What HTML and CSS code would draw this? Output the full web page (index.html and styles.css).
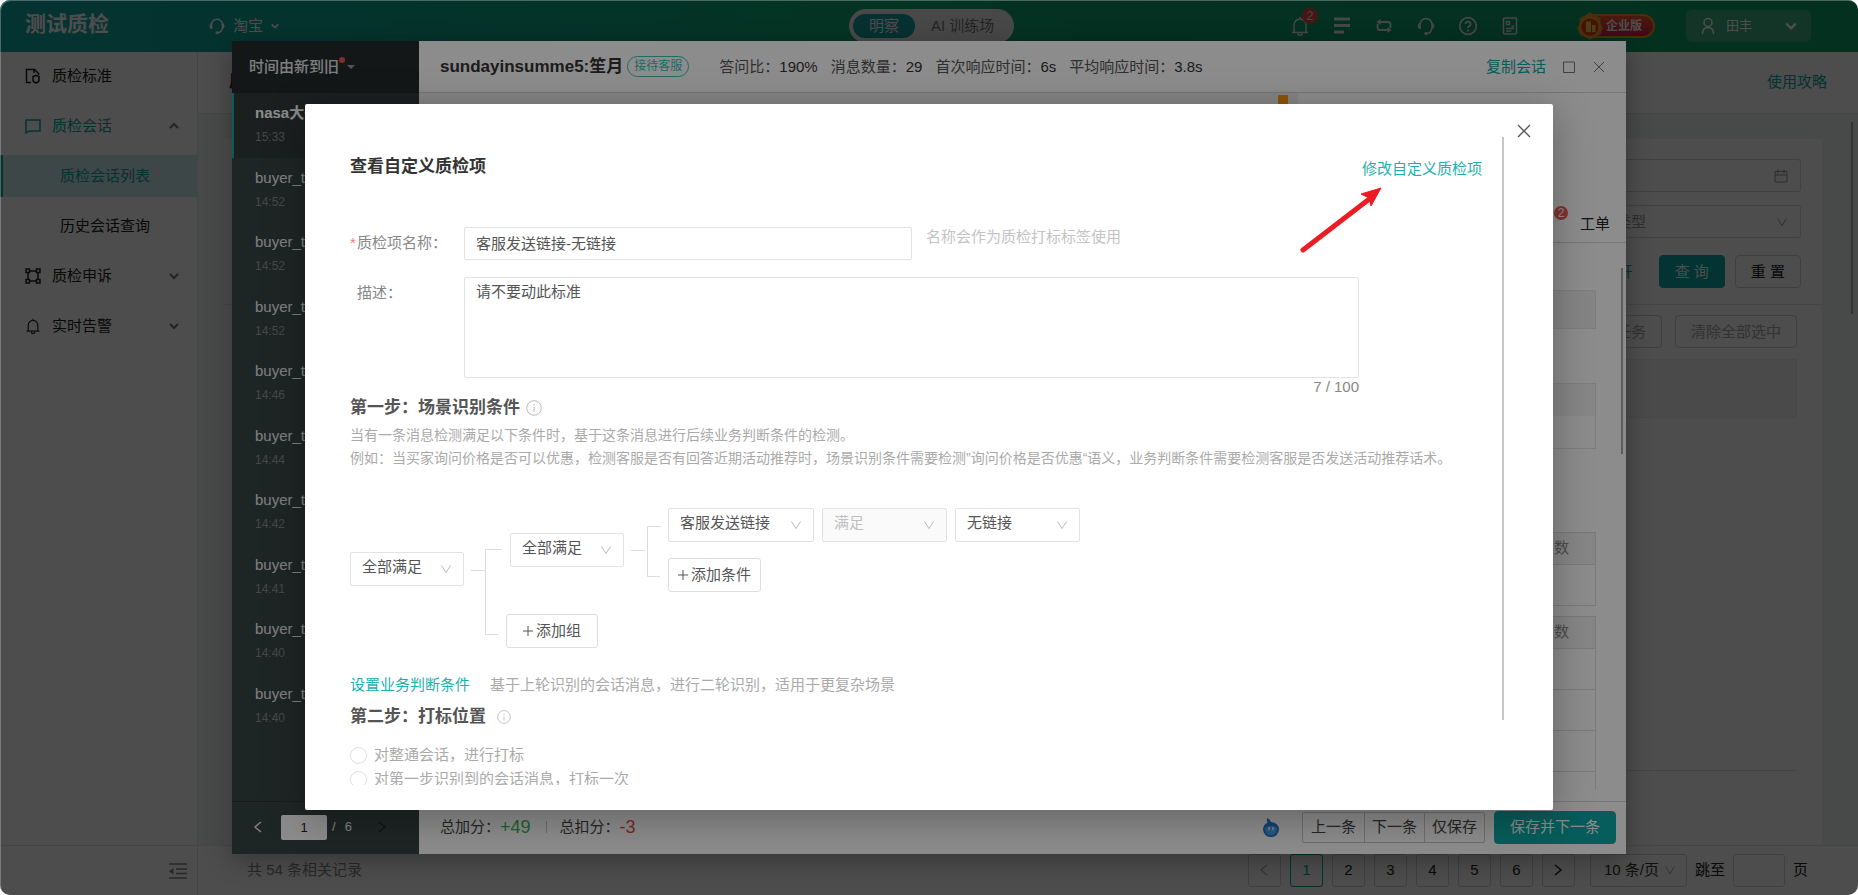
FILE: index.html
```html
<!DOCTYPE html>
<html lang="zh-CN">
<head>
<meta charset="utf-8">
<title>测试质检</title>
<link rel="stylesheet" href="styles.css">
</head>
<body>
<svg class="defs" aria-hidden="true">
  <symbol id="down" viewBox="0 0 12 12"><path d="M1.500 2.500 6 9.500l4.500-7" fill="none" stroke="currentColor"/></symbol>
  <symbol id="chev" viewBox="0 0 12 12"><path d="M2 4l4 4 4-4" fill="none" stroke="currentColor" stroke-width="2"/></symbol>
  <symbol id="left" viewBox="0 0 12 12"><path d="M9 1 3 6l6 5" fill="none" stroke="currentColor" stroke-width="1.500"/></symbol>
  <symbol id="right" viewBox="0 0 12 12"><path d="M3 1l6 5-6 5" fill="none" stroke="currentColor" stroke-width="1.500"/></symbol>
  <symbol id="close" viewBox="0 0 14 14"><path d="M1 1l12 12M13 1 1 13" fill="none" stroke="currentColor" stroke-width="1.300"/></symbol>
  <symbol id="info" viewBox="0 0 16 16"><circle cx="8" cy="8" r="7.300" fill="none" stroke="currentColor"/><path d="M8 7v5M8 4v1.500" stroke="currentColor"/></symbol>
  <symbol id="headset" viewBox="0 0 20 20"><path d="M4 13V8.500a6 6 0 0 1 12 0V13M15.500 13q-.5 4.500-5 4.500" fill="none" stroke="currentColor" stroke-width="1.600"/><path d="M3.500 7Q.5 10 3.500 13zM16.500 7q3 3 0 6z" fill="currentColor" stroke="currentColor"/><circle cx="10" cy="17.500" r="1.700" fill="currentColor"/></symbol>
  <symbol id="bell" viewBox="0 0 20 20"><path d="M2 16.500h16M4 16V9a6 6 0 0 1 12 0v7M10 3V1M8 17.500a2 2 0 0 0 4 0" fill="none" stroke="currentColor" stroke-width="1.500"/></symbol>
</svg>

<div class="app">
  <header class="topbar">
    <h1 class="brand">测试质检</h1>
    <button class="shop"><svg class="i18"><use href="#headset"/></svg><span>淘宝</span><svg class="i10"><use href="#chev"/></svg></button>
    <nav class="switch"><a class="switch-item on" href="#">明察</a><a class="switch-item" href="#">AI 训练场</a></nav>
    <div class="tools">
      <button class="tool" aria-label="通知"><svg class="i20"><use href="#bell"/></svg><span class="count">2</span></button>
      <button class="tool" aria-label="列表"><svg class="i20" viewBox="0 0 20 20"><path d="M2 3h16M2 9.500h16M2 16h10" stroke="currentColor" stroke-width="3"/></svg></button>
      <button class="tool" aria-label="切换"><svg class="i20" viewBox="0 0 20 20"><path d="M5 6h9q2.500 0 2.500 2.500V12M15 14H6q-2.500 0-2.500-2.500V8" fill="none" stroke="currentColor" stroke-width="1.800"/><path d="M6.500 3v6L2.500 6zM13.500 11v6l4-3z" fill="currentColor"/></svg></button>
      <button class="tool" aria-label="客服"><svg class="i20"><use href="#headset"/></svg></button>
      <button class="tool" aria-label="帮助"><svg class="i20" viewBox="0 0 20 20"><circle cx="10" cy="10" r="8.300" fill="none" stroke="currentColor" stroke-width="1.800"/><path d="M7.500 8a2.500 2.500 0 1 1 3.500 2.300q-1 .5-1 1.700M10 13.500v2" fill="none" stroke="currentColor" stroke-width="1.800"/></svg></button>
      <button class="tool" aria-label="文档"><svg class="i20" viewBox="0 0 20 20"><rect x="3.500" y="2" width="13" height="16" rx="1" fill="none" stroke="currentColor" stroke-width="1.500"/><path d="M6.500 5.500h3v3h-3zM11.500 10.500H14M6 12.500h8M6 15h5.500" fill="none" stroke="currentColor" stroke-width="1.300"/></svg></button>
    </div>
    <div class="edition">
      <svg class="medal" viewBox="0 0 28 30"><path d="M14 1l4 3 6 3 1 7 2 3-3 7-5 2-5 3-5-3-5-2-3-7 2-3 1-7 6-3z" fill="#f39a2c"/><circle cx="14" cy="16" r="9.500" fill="#e8470c" stroke="#ffb03a" stroke-width="1.500"/><path d="M10 10.500h5V21h-5zM16 14h3.500v7H16z" fill="#ffd05a"/></svg>
      <span class="edition-name">企业版</span>
    </div>
    <button class="user"><svg class="i18" viewBox="0 0 18 18"><circle cx="9" cy="5.500" r="4" fill="none" stroke="currentColor" stroke-width="1.500"/><path d="M3.500 17q0-6.500 5.500-6.500t5.500 6.500" fill="none" stroke="currentColor" stroke-width="1.500"/></svg><span class="user-name">田丰</span><svg class="i14"><use href="#chev"/></svg></button>
  </header>

  <aside class="side">
    <nav class="menu">
      <a class="menu-item" href="#"><svg class="i16" viewBox="0 0 16 16"><path d="M6 14.500H1.500v-13h8l4 4V7M9 1.500V5" fill="none" stroke="currentColor" stroke-width="1.500"/><path d="M8 8.500l3-1 3 1V12q0 2-3 3-3-1-3-3z" fill="none" stroke="currentColor" stroke-width="1.500"/></svg><span>质检标准</span></a>
      <a class="menu-item open" href="#"><svg class="i16" viewBox="0 0 16 16"><path d="M1 2h14v11H4l-3 2z" fill="none" stroke="currentColor" stroke-width="1.500"/></svg><span>质检会话</span><svg class="i12 arrow up"><use href="#chev"/></svg></a>
      <a class="menu-sub on" href="#">质检会话列表</a>
      <a class="menu-sub" href="#">历史会话查询</a>
      <a class="menu-item" href="#"><svg class="i16" viewBox="0 0 16 16"><path d="M3 4v8M13 4v8M4 3h8M4 13h8M1 1h3.500v3.500H1zM11.500 1H15v3.500h-3.500zM1 11.500h3.500V15H1zM11.500 11.500H15V15h-3.500z" fill="none" stroke="currentColor" stroke-width="1.500"/></svg><span>质检申诉</span><svg class="i12 arrow"><use href="#chev"/></svg></a>
      <a class="menu-item" href="#"><svg class="i16"><use href="#bell"/></svg><span>实时告警</span><svg class="i12 arrow"><use href="#chev"/></svg></a>
    </nav>
    <div class="fold"><button class="plain" aria-label="收起"><svg class="i18" viewBox="0 0 18 18"><path d="M0 2h18M7 7h11M7 11.500h11M0 16h18" stroke="currentColor" stroke-width="1.500"/><path d="M4.500 6v6.500L0 9.200z" fill="currentColor"/></svg></button></div>
  </aside>

  <main class="main">
    <div class="pagehead"><h2 class="pagetitle">质检会话列表</h2><a class="guide" href="#">使用攻略</a></div>
    <div class="content">
      <span class="content-bar"></span>
      <section class="card">
        <div class="filters">
          <div class="field"><input class="field-input" type="text" aria-label="日期"><svg class="i14" viewBox="0 0 14 14"><path d="M1 2.500h12v10.500H1zM1 6h12M4 .5v4M10 .5v4" fill="none" stroke="currentColor"/></svg></div>
          <div class="field"><select class="field-input" aria-label="类型"><option>类型</option></select><svg class="i12"><use href="#down"/></svg></div>
          <div class="actions"><a class="guide" href="#">展开</a><button class="btn primary">查 询</button><button class="btn">重 置</button></div>
        </div>
        <div class="list">
          <div class="bulk"><button class="btn off">任务</button><button class="btn off">清除全部选中</button></div>
          <div class="listhead"></div>
          <div class="listbody"></div>
        </div>
      </section>
    </div>
    <footer class="pages">
      <span class="total">共 54 条相关记录</span>
      <div class="pager">
        <button class="pg dim" aria-label="上一页"><svg class="i12"><use href="#left"/></svg></button>
        <button class="pg on">1</button><button class="pg">2</button><button class="pg">3</button><button class="pg">4</button><button class="pg">5</button><button class="pg">6</button>
        <button class="pg" aria-label="下一页"><svg class="i12"><use href="#right"/></svg></button>
      </div>
      <div class="size"><select class="size-select" aria-label="每页条数"><option>10 条/页</option></select><svg class="i12"><use href="#down"/></svg></div>
      <label class="jump">跳至<input class="jump-input" type="text">页</label>
    </footer>
  </main>
</div>
<div class="mask"></div>

<section class="drawer">
  <aside class="chats">
    <button class="sort">时间由新到旧<span class="sort-dot"></span><svg class="i8" viewBox="0 0 8 8"><path d="M0 2h8L4 6z" fill="currentColor"/></svg></button>
    <ul class="chatlist">
      <li class="chat on"><span class="chat-name">nasa大哥</span><time class="chat-time">15:33</time></li>
      <li class="chat"><span class="chat-name">buyer_test</span><time class="chat-time">14:52</time></li>
      <li class="chat"><span class="chat-name">buyer_test</span><time class="chat-time">14:52</time></li>
      <li class="chat"><span class="chat-name">buyer_test</span><time class="chat-time">14:52</time></li>
      <li class="chat"><span class="chat-name">buyer_test</span><time class="chat-time">14:46</time></li>
      <li class="chat"><span class="chat-name">buyer_test</span><time class="chat-time">14:44</time></li>
      <li class="chat"><span class="chat-name">buyer_test</span><time class="chat-time">14:42</time></li>
      <li class="chat"><span class="chat-name">buyer_test</span><time class="chat-time">14:41</time></li>
      <li class="chat"><span class="chat-name">buyer_test</span><time class="chat-time">14:40</time></li>
      <li class="chat"><span class="chat-name">buyer_test</span><time class="chat-time">14:40</time></li>
    </ul>
    <div class="chatpages"><button class="plain" aria-label="上一页"><svg class="i12"><use href="#left"/></svg></button><input class="chatpage" type="text" value="1" aria-label="页码"><span class="of">/</span><span>6</span><button class="plain next" aria-label="下一页"><svg class="i12"><use href="#right"/></svg></button></div>
  </aside>
  <div class="detail">
    <header class="detailhead">
      <h2 class="detailname">sundayinsumme5:笙月</h2><span class="tag">接待客服</span>
      <dl class="stats">
        <div><dt>答问比：</dt><dd>190%</dd></div><div><dt>消息数量：</dt><dd>29</dd></div><div><dt>首次响应时间：</dt><dd>6s</dd></div><div><dt>平均响应时间：</dt><dd>3.8s</dd></div>
      </dl>
      <a class="copy" href="#">复制会话</a>
      <button class="plain max" aria-label="最大化"><svg class="i14" viewBox="0 0 14 14"><path d="M1.500 2h11v10.500h-11z" fill="none" stroke="currentColor"/></svg></button>
      <button class="plain" aria-label="关闭"><svg class="i12" viewBox="0 0 12 12"><path d="M1 1l10 10M11 1 1 11" stroke="currentColor"/></svg></button>
    </header>
    <div class="detailbody">
      <div class="talk"><span class="marker"></span></div>
      <div class="info">
        <div class="tabs"><span class="num">2</span><a class="tab" href="#">工单</a></div>
        <div class="infobody">
          <span class="info-bar"></span>
          <div class="strip"></div>
          <div class="panel"><div class="panelhead"></div></div>
          <table class="scores"><thead><tr><th>数</th></tr></thead><tbody><tr><td></td></tr></tbody></table>
          <table class="scores"><thead><tr><th>数</th></tr></thead><tbody><tr><td></td></tr><tr><td></td></tr><tr><td></td></tr><tr><td></td></tr></tbody></table>
        </div>
      </div>
    </div>
    <footer class="detailfoot">
      <span>总加分：</span><b class="plus">+49</b><span class="rule"></span><span>总扣分：</span><b class="minus">-3</b>
      <svg class="drop" viewBox="0 0 16 20"><path d="M4 1q3 1 4 4 8 1 8 7.500A7.500 7.500 0 0 1 8 20a7.500 7.500 0 0 1-8-7.500Q0 8 4.500 5.500 3.500 3 4 1z" fill="#2a78d0"/><path d="M2 11q6-4 12 0-.5 7-6 7t-6-7z" fill="#4ba3ee"/><path d="M6 10v3M10 10v3" stroke="#e8f4ff" stroke-width="1.500"/></svg>
      <div class="btns"><button class="gbtn">上一条</button><button class="gbtn">下一条</button><button class="gbtn">仅保存</button></div>
      <button class="btn primary save">保存并下一条</button>
    </footer>
  </div>
</section>
<div class="mask"></div>

<section class="modal" role="dialog" aria-label="查看自定义质检项">
  <button class="plain modalclose" aria-label="关闭"><svg class="i14"><use href="#close"/></svg></button>
  <span class="modal-bar"></span>
  <svg class="pointer" viewBox="0 0 84 68"><path d="M5 63 70 13" stroke="#ed1c24" stroke-width="5" stroke-linecap="round"/><path d="M83 1 63 7l8 4 2 8z" fill="#ed1c24" stroke="#ed1c24"/></svg>
  <div class="modalbody">
    <div class="modalhead"><h2 class="h">查看自定义质检项</h2><a class="edit" href="#">修改自定义质检项</a></div>
    <div class="row">
      <label class="label" for="name"><span class="star">*</span>质检项名称：</label>
      <input class="input" id="name" type="text" value="客服发送链接-无链接">
      <span class="hint">名称会作为质检打标标签使用</span>
    </div>
    <div class="row">
      <label class="label" for="desc"><span class="star"></span>描述：</label>
      <div class="desc"><textarea class="area" id="desc">请不要动此标准</textarea><span class="limit">7 / 100</span></div>
    </div>
    <h3 class="h soft">第一步：场景识别条件<svg class="i16"><use href="#info"/></svg></h3>
    <p class="note">当有一条消息检测满足以下条件时，基于这条消息进行后续业务判断条件的检测。<br>例如：当买家询问价格是否可以优惠，检测客服是否有回答近期活动推荐时，场景识别条件需要检测”询问价格是否优惠“语义，业务判断条件需要检测客服是否发送活动推荐话术。</p>
    <div class="tree">
      <div class="sel root"><select class="sel-box" aria-label="组关系"><option>全部满足</option></select><svg class="i12"><use href="#down"/></svg></div>
      <svg class="link1" viewBox="0 0 31 86"><path d="M0 21.500h14M31 .5H14.500v85H27" fill="none" stroke="#dcdcdc"/></svg>
      <div class="groups">
        <div class="group">
          <div class="sel inner"><select class="sel-box" aria-label="条件关系"><option>全部满足</option></select><svg class="i12"><use href="#down"/></svg></div>
          <svg class="link2" viewBox="0 0 30 51"><path d="M0 24.500h14M30 .5H16.500v50H29" fill="none" stroke="#dcdcdc"/></svg>
          <div class="conds">
            <div class="cond">
              <div class="sel wide"><select class="sel-box" aria-label="条件"><option>客服发送链接</option></select><svg class="i12"><use href="#down"/></svg></div>
              <div class="sel mid"><select class="sel-box" aria-label="满足" disabled><option>满足</option></select><svg class="i12"><use href="#down"/></svg></div>
              <div class="sel mid"><select class="sel-box" aria-label="链接"><option>无链接</option></select><svg class="i12"><use href="#down"/></svg></div>
            </div>
            <button class="add"><svg class="i10" viewBox="0 0 10 10"><path d="M0 5h10M5 0v10" stroke="currentColor"/></svg>添加条件</button>
          </div>
        </div>
        <button class="add"><svg class="i10" viewBox="0 0 10 10"><path d="M0 5h10M5 0v10" stroke="currentColor"/></svg>添加组</button>
      </div>
    </div>
    <p class="more"><a class="edit" href="#">设置业务判断条件</a><span>基于上轮识别的会话消息，进行二轮识别，适用于更复杂场景</span></p>
    <h3 class="h soft second">第二步：打标位置<svg class="i14"><use href="#info"/></svg></h3>
    <label class="radio"><input class="radio-dot" type="radio" name="pos">对整通会话，进行打标</label>
    <label class="radio"><input class="radio-dot" type="radio" name="pos">对第一步识别到的会话消息，打标一次</label>
  </div>
</section>
</body>
</html>
```
FILE: styles.css
```css
* { box-sizing: border-box; }
body {
  margin: 0; height: 100vh; overflow: hidden; position: relative; background: #fff; color: #222;
  font: 15px/24px "Liberation Sans", "Noto Sans CJK SC", sans-serif;
}
h1, h2, h3, p, ul, dl, dd { margin: 0; padding: 0; }
ul { list-style: none; }
a { text-decoration: none; color: inherit; }
button, input, select, textarea { font: inherit; color: inherit; margin: 0; padding: 0; }
button { background: none; border: 0; white-space: nowrap; }
select { appearance: none; background: none; opacity: 1; }
svg { flex: none; display: block; }
.defs { position: absolute; width: 0; height: 0; }
.i8 { width: 8px; height: 8px; } .i10 { width: 10px; height: 10px; } .i12 { width: 12px; height: 12px; }
.i14 { width: 14px; height: 14px; } .i16 { width: 16px; height: 16px; }
.i18 { width: 18px; height: 18px; } .i20 { width: 20px; height: 20px; }
.plain { display: flex; }

/* layers */
.app {
  height: 100vh; display: grid; grid-template: 52px minmax(0, 1fr) / 198px minmax(0, 1fr);
  border-radius: 10px; overflow: hidden; background: #fff;
}
.mask { position: absolute; inset: 0; background: rgba(0, 0, 0, .45); border-radius: 10px; box-shadow: inset 1px 1px rgba(255, 255, 255, .2); }

/* top bar */
.topbar {
  grid-column: 1 / -1; position: relative; display: flex; align-items: center; color: #fff; padding: 0 47px 0 25px;
  background: linear-gradient(90deg, #10aaa5 0, #11a99b 15%, #12ad7a 42%, #0fa271 60%, #0da068 100%);
}
.brand { font-size: 21px; line-height: 40px; flex: none; width: 183px; padding-bottom: 4px; }
.shop { display: flex; align-items: center; gap: 7px; }
.switch { position: absolute; left: 50%; top: 9px; margin-left: -80px; display: flex; padding: 5px 4px; background: #f0eeee; color: #777; border-radius: 17px; }
.switch-item { padding: 0 16px; border-radius: 12px; }
.switch-item.on { background: #16a3a5; color: #fff; }
.tools { margin-left: auto; display: flex; gap: 22px; }
.tool { position: relative; color: #e6efe9; }
.count { position: absolute; left: 12px; top: -8px; width: 16px; height: 16px; border-radius: 8px; background: #f04848; font-size: 12px; line-height: 16px; }
.edition { display: flex; align-items: center; margin: 0 31px 0 56px; width: 79px; }
.medal { width: 28px; height: 30px; position: relative; }
.edition-name { flex: 1; margin-left: -14px; padding-left: 16px; border: 2px solid #f29a20; border-left: 0; border-radius: 0 12px 12px 0; background: linear-gradient(#f4582a, #d61d4e); font-weight: bold; font-size: 12px; line-height: 20px; white-space: nowrap; }
.user { display: flex; align-items: center; width: 125px; height: 32px; padding: 0 13px; border-radius: 6px; background: rgba(255, 255, 255, .2); }
.user-name { flex: 1; text-align: left; padding-left: 9px; font-size: 13px; }

/* side menu */
.side { display: flex; flex-direction: column; border-right: 1px solid #e6e8e8; }
.menu { flex: 1; margin-top: -1px; }
.menu-item { display: flex; align-items: center; height: 50px; padding: 0 17px 0 25px; gap: 11px; }
.menu-item .arrow { margin-left: auto; color: #777; }
.arrow.up { transform: rotate(180deg); }
.menu-item.open { color: #0ba9a6; }
.menu-sub { display: block; padding-left: 60px; line-height: 42px; margin: 4px 0 8px; }
.menu-sub.on { background: #cfeceb; color: #0ba9a6; box-shadow: inset 3px 0 #0ba9a6; }
.menu-sub + .menu-sub { margin-bottom: 4px; }
.fold { height: 50px; border-top: 1px solid #e6e8e8; display: flex; align-items: center; justify-content: flex-end; padding-right: 10px; color: #888; }

/* page behind */
.main { display: flex; flex-direction: column; min-height: 0; }
.pagehead { height: 62px; display: flex; justify-content: space-between; align-items: center; padding: 0 31px 2px; border-bottom: 1px solid #dde3e3; }
.pagetitle { font-size: 17px; }
.guide { color: #0ba9a6; }
.content { position: relative; flex: 1; min-height: 0; background: #f0f3f3; padding: 25px 36px 0 26px; display: flex; }
.content-bar { position: absolute; right: 5px; top: 8px; width: 2px; height: 192px; background: #aaa; }
.card { flex: 1; background: #fff; display: flex; flex-direction: column; }
.filters { padding: 20px 21px 16px; border-bottom: 1px solid #e8e8e8; display: flex; flex-direction: column; align-items: flex-end; }
.field { display: flex; align-items: center; width: 300px; height: 33px; border: 1px solid #d9d9d9; border-radius: 3px; margin-bottom: 13px; padding: 0 12px; color: #999; }
.field-input { flex: 1; min-width: 0; border: 0; background: none; padding-left: 102px; }
.actions { display: flex; align-items: center; gap: 10px; margin-top: 4px; }
.actions .guide { margin-right: 16px; }
.btn { height: 33px; padding: 0 15px; border: 1px solid #d4d4d4; border-radius: 4px; }
.btn.primary { background: #0ba9a6; border-color: #0ba9a6; color: #fff; }
.btn.off { color: #aaa; }
.list { flex: 1; padding: 10px 25px 0; display: flex; flex-direction: column; }
.bulk { display: flex; justify-content: flex-end; gap: 13px; }
.listhead { height: 59px; background: #f7f7f7; border: 1px solid #eee; margin-top: 11px; }
.listbody { flex: 1; border-bottom: 1px solid #e2e2e2; margin-bottom: 74px; }
.pages { height: 50px; border-top: 1px solid #e6e8e8; display: flex; align-items: center; padding: 0 50px 1px 49px; }
.total { margin-right: auto; color: #888; }
.pager { display: flex; gap: 9px; }
.pg { width: 33px; height: 33px; border: 1px solid #d4d4d4; border-radius: 3px; display: flex; align-items: center; justify-content: center; }
.pg.on { border-color: #0ba9a6; color: #0ba9a6; }
.pg.dim { color: #bbb; }
.size { display: flex; align-items: center; width: 97px; height: 33px; margin: 0 8px 0 15px; padding: 0 10px 0 13px; border: 1px solid #d4d4d4; border-radius: 3px; color: #aaa; }
.size-select { flex: 1; min-width: 0; border: 0; color: #333; }
.jump { display: flex; align-items: center; gap: 8px; }
.jump-input { width: 52px; height: 33px; border: 1px solid #d4d4d4; border-radius: 3px; background: none; }

/* conversation drawer */
.drawer { position: absolute; inset: 41px 232px; display: flex; background: #fff; box-shadow: 0 6px 24px rgba(0, 0, 0, .3); }
.chats { width: 187px; display: flex; flex-direction: column; background: #384444; color: #e8e8e8; }
.sort { display: flex; align-items: center; height: 52px; padding-left: 17px; background: #242b2d; font-weight: 500; }
.sort-dot { width: 6px; height: 6px; border-radius: 3px; background: #f05050; margin: -14px 2px 0 0; }
.sort svg { color: #999; }
.chatlist { flex: 1; min-height: 0; overflow: hidden; }
.chat { height: 64px; padding: 8px 0 0 23px; }
.chat:nth-child(odd) { height: 65px; }
.chat.on { padding-left: 21px; border-left: 2px solid #0ba9a6; background: #32393b; font-weight: bold; color: #fff; }
.chat-name, .chat-time { display: block; }
.chat-time { font-size: 12px; color: #7c8484; font-weight: normal; }
.chatpages { height: 53px; border-top: 1px solid #2b3535; display: flex; align-items: center; font-size: 13px; padding: 0 0 2px 20px; }
.chatpage { width: 46px; height: 25px; margin: 0 5px 0 17px; border: 0; border-radius: 2px; background: #fff; color: #222; text-align: center; }
.of { margin-right: 9px; }
.next { margin-left: 24px; color: #1e2626; }
.detail { flex: 1; min-width: 0; display: flex; flex-direction: column; }
.detailhead { display: flex; align-items: center; height: 52px; padding: 0 21px; border-bottom: 1px solid #d8d8d8; }
.detailname { font-size: 17px; color: #333; }
.tag { margin: 0 30px 0 4px; padding: 0 6px; border: 1px solid #3cc0bc; border-radius: 11px; color: #3cc0bc; font-size: 12px; line-height: 19px; }
.stats { display: flex; gap: 13px; color: #555; }
.stats div { display: flex; }
.stats dd { color: #333; }
.copy { margin-left: auto; color: #0ba9a6; }
.max { margin: 0 17px 0 16px; }
.detailhead .plain { color: #777; }
.detailbody { flex: 1; min-height: 0; display: flex; }
.talk { flex: 1; background: #f0f0f0; padding: 2px 10px; }
.marker { display: block; width: 10px; height: 9px; background: #ff9c07; margin-left: auto; }
.info { width: 328px; display: flex; flex-direction: column; }
.tabs { height: 150px; display: flex; align-items: flex-end; justify-content: flex-end; gap: 12px; padding: 0 16px 6px; border-bottom: 1px solid #d8d8d8; }
.num { width: 14px; height: 14px; border-radius: 7px; background: #f05a55; color: #fff; font-size: 12px; line-height: 14px; text-align: center; margin-bottom: 16px; }
.infobody { position: relative; flex: 1; min-height: 0; overflow: hidden; padding: 47px 30px 0; margin-bottom: 11px; }
.info-bar { position: absolute; right: 3px; top: 25px; width: 2px; height: 186px; background: #a8a8a8; }
.strip { height: 39px; background: #f2f2f2; border: 1px solid #e5e5e5; }
.panel { height: 66px; margin: 54px 0 83px; border: 1px solid #e5e5e5; }
.panelhead { height: 32px; background: #f5f5f5; }
.scores { width: 100%; border-collapse: collapse; margin-bottom: 10px; }
.scores th { height: 32px; padding: 0 26px 2px; background: #f4f4f4; color: #8c8c8c; font-weight: normal; text-align: right; }
.scores th, .scores td { border: 1px solid #dedede; }
.scores td { height: 41px; }
.detailfoot { height: 53px; border-top: 1px solid #d8d8d8; display: flex; align-items: center; padding: 0 10px 2px 21px; color: #444; }
.plus, .minus { font-size: 18px; font-weight: normal; color: #35b558; }
.minus { color: #e04a4a; }
.rule { width: 1px; height: 12px; background: #c4c4c4; margin: 0 13px 0 15px; }
.drop { width: 16px; height: 20px; margin-left: auto; }
.btns { display: flex; margin: 0 9px 0 23px; border: 1px solid #c8c8c8; border-radius: 2px; }
.gbtn { height: 29px; padding: 0 8px; }
.gbtn + .gbtn { border-left: 1px solid #c8c8c8; padding: 0 7px; }

/* rule dialog */
.modal { position: absolute; inset: 104px 305px 85px; background: #fff; border-radius: 2px; padding: 33px 49px 25px 45px; color: #555; box-shadow: 0 8px 40px rgba(0, 0, 0, .3); }
.modalclose { position: absolute; right: 22px; top: 20px; }
.modal-bar { position: absolute; right: 49px; top: 33px; bottom: 90px; width: 2px; background: #c6c6c6; }
.pointer { position: absolute; right: 171px; top: 83px; width: 84px; height: 68px; }
.modalbody { height: 100%; overflow: hidden; padding-top: 16px; }
.modalhead { display: flex; justify-content: space-between; height: 28px; padding-right: 22px; }
.h { font-size: 17px; line-height: 24px; color: #333; display: flex; align-items: center; gap: 6px; }
.h.soft { color: #555; }
.h svg { color: #bbb; }
.edit { color: #1fb0ad; align-self: flex-end; }
.row { display: flex; margin-top: 17px; }
.modalhead + .row { margin-top: 46px; }
.label { width: 114px; line-height: 32px; color: #888; display: flex; flex: none; }
.star { width: 7px; color: #ff7875; }
.input, .area { border: 1px solid #e2e2e2; border-radius: 2px; background: #fff; }
.input { width: 448px; height: 33px; padding: 0 11px 3px; }
.hint { margin-left: 14px; line-height: 20px; color: #c4c4c4; }
.desc { flex: 1; margin-right: 145px; display: flex; flex-direction: column; }
.area { height: 101px; padding: 2px 11px; resize: none; display: block; }
.limit { text-align: right; line-height: 18px; color: #888; }
.note { font-size: 14px; line-height: 23px; color: #aaa; margin: 4px 0 38px; white-space: nowrap; }
.tree { display: flex; align-items: flex-start; }
.sel { position: relative; height: 34px; width: 114px; }
.sel-box { width: 100%; height: 100%; border: 1px solid #e2e2e2; border-radius: 2px; padding: 0 11px 4px; }
.sel-box:disabled { background: #fafafa; color: #c0c0c0; }
.sel svg { position: absolute; right: 12px; top: 11px; color: #bbb; pointer-events: none; }
.wide { width: 146px; } .mid { width: 125px; }
.root { margin-top: 44px; }
.link1 { width: 31px; height: 86px; margin: 41px 4px 0 7px; }
.groups { display: flex; flex-direction: column; align-items: flex-start; gap: 22px; }
.group { display: flex; align-items: flex-start; margin-left: 4px; }
.inner { margin-top: 25px; }
.link2 { width: 30px; height: 51px; margin: 18px 7px 0; }
.conds { display: flex; flex-direction: column; align-items: flex-start; gap: 16px; }
.cond { display: flex; gap: 8px; }
.add { display: flex; align-items: center; gap: 3px; height: 34px; padding: 0 9px; border: 1px solid #dedede; border-radius: 3px; }
.groups > .add { padding: 0 16px; }
.more { margin-top: 25px; display: flex; gap: 20px; color: #aaa; }
.second { margin: 8px 0 14px; }
.second svg { margin-left: 5px; }
.radio { display: flex; align-items: center; gap: 7px; color: #aaa; }
.radio-dot { appearance: none; width: 17px; height: 17px; border: 1px solid #ddd; border-radius: 9px; }
```
